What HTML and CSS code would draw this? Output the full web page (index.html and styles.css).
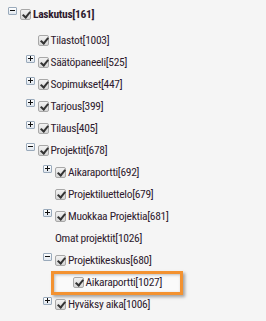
FILE: index.html
```html
<!DOCTYPE html>
<html>
<head>
<meta charset="utf-8">
<link rel="stylesheet" href="styles.css">
</head>
<body>
<ul class="tree">
  <li>
    <div class="row root"><span class="exp minus"></span><span class="cb"></span><span class="label bold">Laskutus[161]</span></div>
    <ul class="sub first">
      <li><div class="row"><span class="exp none"></span><span class="cb"></span><span class="label">Tilastot[1003]</span></div></li>
      <li><div class="row"><span class="exp plus"></span><span class="cb"></span><span class="label">Säätöpaneeli[525]</span></div></li>
      <li><div class="row"><span class="exp plus"></span><span class="cb"></span><span class="label">Sopimukset[447]</span></div></li>
      <li><div class="row"><span class="exp plus"></span><span class="cb"></span><span class="label">Tarjous[399]</span></div></li>
      <li><div class="row"><span class="exp plus"></span><span class="cb"></span><span class="label">Tilaus[405]</span></div></li>
      <li>
        <div class="row"><span class="exp minus"></span><span class="cb"></span><span class="label">Projektit[678]</span></div>
        <ul class="sub">
          <li><div class="row"><span class="exp plus"></span><span class="cb"></span><span class="label">Aikaraportti[692]</span></div></li>
          <li><div class="row"><span class="exp none"></span><span class="cb"></span><span class="label">Projektiluettelo[679]</span></div></li>
          <li><div class="row"><span class="exp plus"></span><span class="cb"></span><span class="label">Muokkaa Projektia[681]</span></div></li>
          <li><div class="row"><span class="exp none"></span><span class="label">Omat projektit[1026]</span></div></li>
          <li>
            <div class="row"><span class="exp minus"></span><span class="cb"></span><span class="label">Projektikeskus[680]</span></div>
            <ul class="sub">
              <li><div class="row highlight"><span class="exp none"></span><span class="cb"></span><span class="label">Aikaraportti[1027]</span></div></li>
            </ul>
          </li>
          <li><div class="row"><span class="exp plus"></span><span class="cb"></span><span class="label">Hyväksy aika[1006]</span></div></li>
        </ul>
      </li>
    </ul>
  </li>
</ul>
</body>
</html>
```
FILE: styles.css
```css
html, body {
  margin: 0;
  padding: 0;
  background: #f5f5f5;
}
body {
  width: 266px;
  height: 321px;
  overflow: hidden;
  font-family: Roboto, "Liberation Sans", sans-serif;
  font-stretch: 75%;
  font-size: 11.5px;
  letter-spacing: -0.3px;
  color: #2f1b2f;
}
ul {
  list-style: none;
  margin: 0;
  padding: 0;
}
.tree {
  padding: 3px 0 0 8px;
}
.sub {
  padding-left: 17.5px;
}
.sub.first {
  margin-top: 4px;
}
.row {
  display: flex;
  align-items: center;
  height: 22px;
  position: relative;
}
.exp {
  width: 9px;
  height: 8px;
  flex: none;
  margin-right: 3px;
  margin-top: -6px;
  box-sizing: border-box;
  border: 1px solid #9aaabb;
  border-radius: 1px;
  background: linear-gradient(#ffffff, #dfe6ee);
  position: relative;
}
.exp.none {
  border: none;
  background: none;
}
.exp.plus::before, .exp.minus::before {
  content: "";
  position: absolute;
  left: 1px;
  top: 2px;
  width: 5px;
  height: 1px;
  background: #111;
}
.exp.plus::after {
  content: "";
  position: absolute;
  left: 3px;
  top: 0px;
  width: 1px;
  height: 5px;
  background: #111;
}
.cb {
  width: 11px;
  height: 11px;
  flex: none;
  box-sizing: border-box;
  border: 1px solid #a8a8a8;
  border-radius: 2px;
  background: linear-gradient(#f2f2f2, #d6d6d6);
  margin-right: 2px;
  position: relative;
}
.cb::after {
  content: "";
  position: absolute;
  left: 3px;
  top: 0px;
  width: 3px;
  height: 6px;
  border: solid #333;
  border-width: 0 2px 2px 0;
  transform: rotate(40deg);
}
.label {
  white-space: nowrap;
  line-height: 14px;
}
.bold {
  font-weight: bold;
}
.highlight {
  z-index: 0;
}
.highlight::before {
  content: "";
  position: absolute;
  left: -10px;
  top: 0px;
  width: 126px;
  height: 18px;
  border: 3px solid #f39231;
  box-shadow: 2px 2px 3px rgba(0,0,0,0.35), inset 1px 1px 3px rgba(0,0,0,0.25);
  background: #fafafa;
  z-index: -1;
}
```
